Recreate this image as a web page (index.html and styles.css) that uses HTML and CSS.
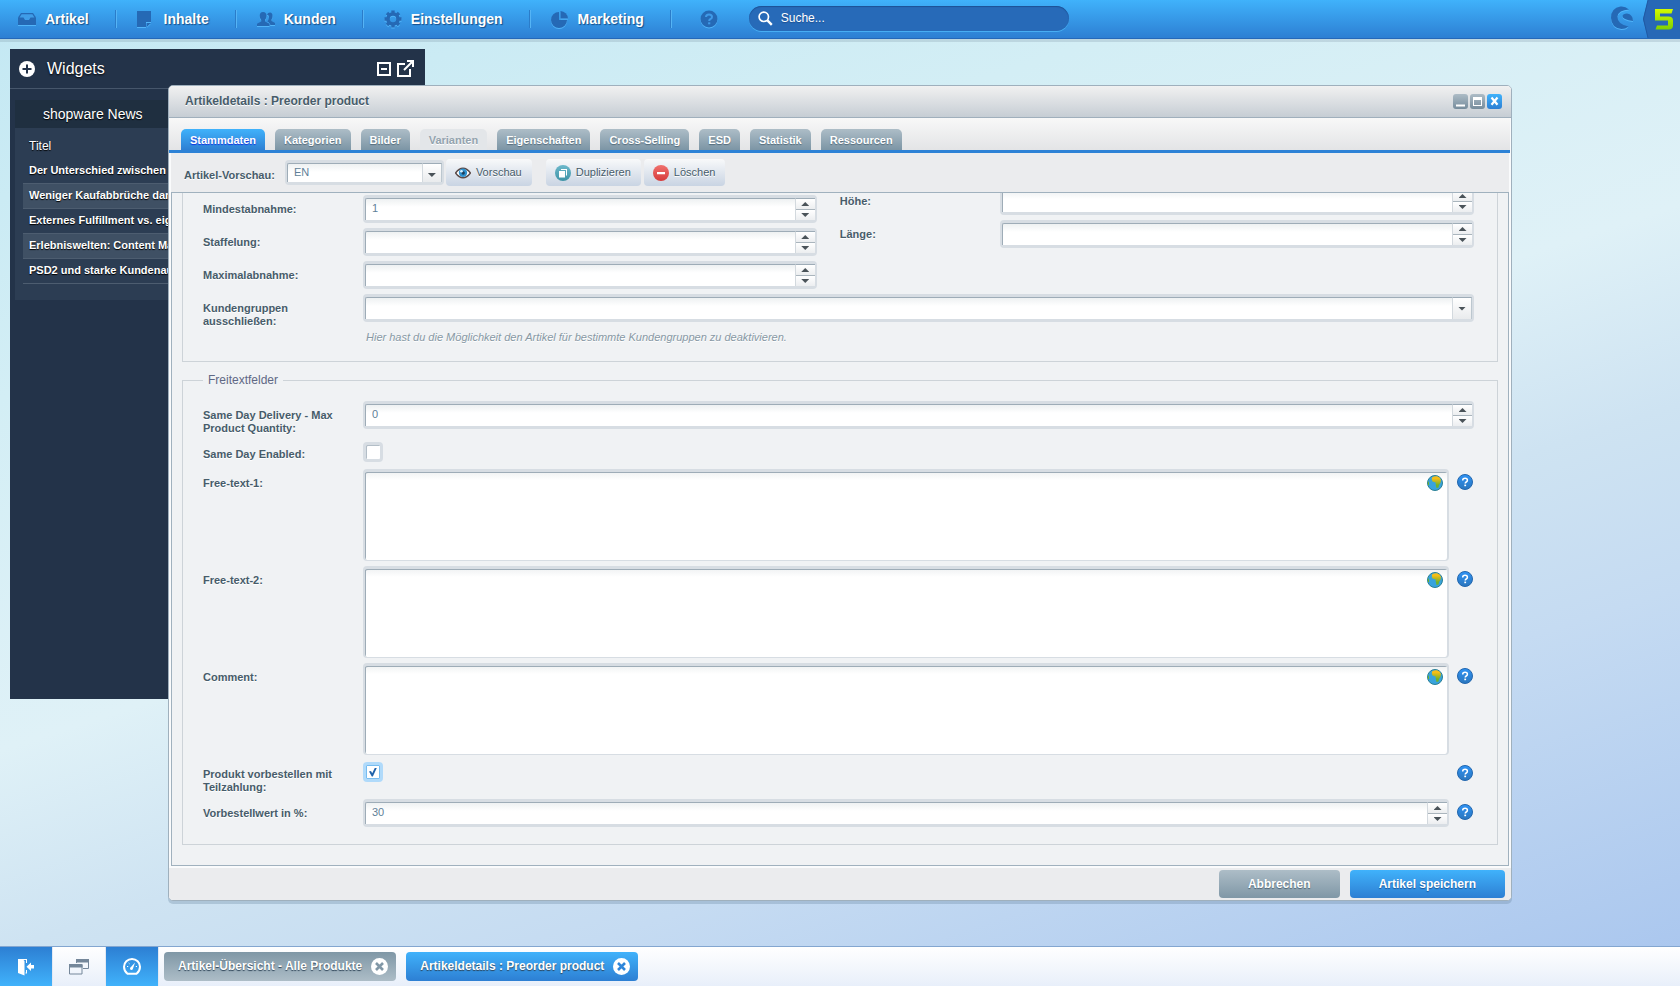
FILE: index.html
```html
<!DOCTYPE html>
<html lang="de">
<head>
<meta charset="utf-8">
<title>Artikeldetails : Preorder product</title>
<link rel="stylesheet" href="styles.css">
</head>
<body>
<svg class="defs" width="0" height="0" aria-hidden="true">
  <defs>
    <linearGradient id="teal" x1="0" y1="0" x2="0" y2="1"><stop offset="0" stop-color="#6cb8cb"/><stop offset="1" stop-color="#3e93a6"/></linearGradient>
    <linearGradient id="red" x1="0" y1="0" x2="0" y2="1"><stop offset="0" stop-color="#f0726e"/><stop offset="1" stop-color="#d63a3a"/></linearGradient>
    <linearGradient id="land" x1="0" y1="0" x2="0" y2="1"><stop offset="0.2" stop-color="#f6bd17"/><stop offset="0.75" stop-color="#6fb22c"/></linearGradient>
    <linearGradient id="lime" x1="0" y1="0" x2="0" y2="1"><stop offset="0" stop-color="#d4fb00"/><stop offset="1" stop-color="#7ed000"/></linearGradient>
    <linearGradient id="helpfill" x1="0" y1="0" x2="0" y2="1"><stop offset="0" stop-color="#2f93f5"/><stop offset="1" stop-color="#2a76bd"/></linearGradient>
    <symbol id="globe" viewBox="0 0 16 16"><circle cx="8" cy="8" r="7.5" fill="#38a3dd" stroke="#2a7f94"/><path d="M5 2.5Q7 1 10 1.2Q13 2 14 5L13.5 8L12 10L11.5 12.5L9.5 13L8.800 10L8.500 7.500L5.500 6.500L4.800 4.500Z" fill="url(#land)"/><path d="M.8 6L2 7.500L2 10L1 10Z" fill="#6fb22c"/></symbol>
    <symbol id="help" viewBox="0 0 16 16"><circle cx="8" cy="8" r="7.5" fill="url(#helpfill)" stroke="#2367ae"/><path d="M5.700 6.400Q5.700 4.300 8.100 4.300Q10.400 4.300 10.400 6.200Q10.400 7.300 9.200 8Q8.200 8.600 8.200 9.500" fill="none" stroke="#fff" stroke-width="1.500"/><path d="M7.300 10.600h1.800v1.600H7.300Z" fill="#fff"/></symbol>
    <symbol id="close" viewBox="0 0 17 17"><circle cx="8.500" cy="8.500" r="8.500" fill="#fff"/><path d="M5 5L12 12M12 5L5 12" stroke="currentColor" stroke-width="2.600"/></symbol>
  </defs>
</svg>

<header class="topbar">
  <nav class="menu">
    <button class="menu-item"><svg width="18" height="14" viewBox="0 0 18 14"><path d="M3 1H15L18 5.500V13H0V5.500Z"/><path d="M3.600 2.300H14.400L16.400 5.500H12.500L11 8H7L5.500 5.500H1.600Z" fill="#3f9de8"/></svg>Artikel</button>
    <button class="menu-item"><svg width="18" height="18" viewBox="0 0 18 18"><path d="M0 1H14V12H9V17H0ZM10 13H13.800L10 16.800Z"/></svg>Inhalte</button>
    <button class="menu-item"><svg width="18" height="16" viewBox="0 0 18 16"><path d="M10 3.500Q11 1.500 13 1.500Q15.500 1.500 15.500 5Q15.500 7 14.500 8.500V10L18 12V14H13.500Q13 12 10.500 10.500Q12 8.500 12 6Q12 4 10 3.500Z"/><path d="M6 1Q9.500 1 9.500 5Q9.500 7.300 8 9V10.500L12.500 12.800V15H0V12.800L4.200 10.500V9Q2.700 7.300 2.700 5Q2.700 1 6 1Z"/></svg>Kunden</button>
    <button class="menu-item"><svg width="18" height="18" viewBox="0 0 18 18"><circle cx="9" cy="9" r="5" fill="none" stroke="#2569b5" stroke-width="3.600"/><path d="M7.300 0.500h3.400v3H7.300ZM7.300 14.500h3.400v3H7.300ZM.5 7.300h3v3.400h-3ZM14.500 7.300h3v3.400h-3Z"/><path d="M7.300 0.500h3.400v3H7.300ZM7.300 14.500h3.400v3H7.300ZM.5 7.300h3v3.400h-3ZM14.500 7.300h3v3.400h-3Z" transform="rotate(45 9 9)"/></svg>Einstellungen</button>
    <button class="menu-item"><svg width="18" height="18" viewBox="0 0 18 18"><path d="M8 2V10H16A8 8 0 1 1 8 2Z"/><path d="M9.500 1A8 8 0 0 1 17 8.500H9.500Z"/></svg>Marketing</button>
    <button class="menu-help" aria-label="Hilfe"><svg width="18" height="18" viewBox="0 0 18 18"><circle cx="9" cy="9" r="8.500"/><path d="M6 7Q6 4.500 9 4.500Q12 4.500 12 7Q12 8.300 10.300 9.200Q9.200 9.800 9.200 11" fill="none" stroke="#3f9ae8" stroke-width="2"/><path d="M8.100 12.300h2.200v2H8.100Z" fill="#3f9ae8"/></svg></button>
  </nav>
  <label class="search">
    <svg width="15" height="15" viewBox="0 0 15 15"><circle cx="5.800" cy="5.800" r="4.700" fill="none" stroke="#fff" stroke-width="1.700"/><path d="M9.200 9.200L13.800 13.800" stroke="#fff" stroke-width="2.400"/></svg>
    <input type="search" placeholder="Suche..." aria-label="Suche">
  </label>
  <div class="brand">
    <svg width="24" height="24" viewBox="0 0 24 24"><path d="M19 3.500Q15 0 10.500 .5Q1 2 1 12Q1.500 22 11.500 23Q15.500 23 18.500 20.500Q7 18 7.500 10.500Q8.500 4 19 3.500Z"/><path d="M12.500 10Q13 7.500 17 7.500Q23 8.500 23 15Q18 14.500 15 13Q12.500 11.800 12.500 10Z"/></svg>
    <svg class="five" width="37" height="38" viewBox="0 0 37 38"><path d="M5 0H37V38H5L0 19Z" fill="#2768b6"/><path d="M5 0L.5 19L5 38" fill="none" stroke="#2059a3"/><path d="M12 9H30L28.500 13.500H17V16.500H25.500Q30 16.500 30 20.500V25.500Q30 29.500 25.500 29.500H12.500L14 25.500H25V20.500H12Z" fill="url(#lime)"/></svg>
  </div>
</header>

<main class="desktop">
  <section class="widgets">
    <header class="widgets-head">
      <button aria-label="Widget hinzufügen"><svg width="16" height="16" viewBox="0 0 16 16"><circle cx="8" cy="8" r="8" fill="#fff"/><path d="M8 3.500V12.500M3.500 8H12.500" stroke="#23334a" stroke-width="2"/></svg></button>
      <h2>Widgets</h2>
      <button aria-label="Minimieren"><svg width="14" height="14" viewBox="0 0 14 14"><path d="M1 1H13V13H1ZM4 7H10" fill="none" stroke="#fff" stroke-width="2"/></svg></button>
      <button aria-label="Abdocken"><svg width="17" height="17" viewBox="0 0 17 17"><path d="M8 4H1V16H13V9M7 10L14.500 2.500" fill="none" stroke="#fff" stroke-width="2"/><path d="M10 0H17V7H15V3.800L13.200 2H10Z" fill="#fff"/></svg></button>
    </header>
    <div class="news">
      <h3>shopware News</h3>
      <table>
        <thead><tr><th>Titel</th></tr></thead>
        <tbody>
          <tr><td>Der Unterschied zwischen</td></tr>
          <tr><td>Weniger Kaufabbrüche dank</td></tr>
          <tr><td>Externes Fulfillment vs. eigen</td></tr>
          <tr><td>Erlebniswelten: Content Mar</td></tr>
          <tr><td>PSD2 und starke Kundenaut</td></tr>
        </tbody>
      </table>
    </div>
  </section>

  <section class="window">
    <header class="window-head">
      <h1>Artikeldetails : Preorder product</h1>
      <button class="tool" aria-label="Minimieren"><svg width="15" height="15" viewBox="0 0 15 15"><path d="M3 10.500H12V12.500H3Z" fill="#fff"/></svg></button>
      <button class="tool" aria-label="Maximieren"><svg width="15" height="15" viewBox="0 0 15 15"><path d="M3 3H12V12H3ZM4 6V11H11V6Z" fill="#fff" fill-rule="evenodd"/></svg></button>
      <button class="tool tool-close" aria-label="Schließen"><svg width="15" height="15" viewBox="0 0 15 15"><path d="M4.500 3.500L10.500 10.800M10.500 3.500L4.500 10.800" stroke="#fff" stroke-width="2.200"/></svg></button>
    </header>
    <div class="tabs" role="tablist">
      <button role="tab" class="tab tab-active" aria-selected="true">Stammdaten</button>
      <button role="tab" class="tab">Kategorien</button>
      <button role="tab" class="tab">Bilder</button>
      <button role="tab" class="tab" disabled>Varianten</button>
      <button role="tab" class="tab">Eigenschaften</button>
      <button role="tab" class="tab">Cross-Selling</button>
      <button role="tab" class="tab">ESD</button>
      <button role="tab" class="tab">Statistik</button>
      <button role="tab" class="tab">Ressourcen</button>
    </div>
    <div class="toolbar">
      <label for="preview">Artikel-Vorschau:</label>
      <div class="control control-small">
        <select id="preview"><option>EN</option></select>
        <span class="trigger"><i class="down"></i></span>
      </div>
      <div class="tool-group">
        <button class="action"><svg width="16" height="16" viewBox="0 0 16 16"><path d="M.6 8Q4 3.200 8 3.200Q12 3.200 15.400 8Q12 12.700 8 12.700Q4 12.700 .6 8Z" fill="#fff" stroke="#5a4a48" stroke-width="1.400"/><circle cx="8" cy="7.800" r="4.200" fill="#2f93d0"/><circle cx="8.200" cy="8" r="1.700" fill="#1c3e5c"/><circle cx="6.500" cy="6.300" r="1.300" fill="#d9f1ff"/></svg>Vorschau</button>
      </div>
      <div class="tool-group">
        <button class="action"><svg width="16" height="16" viewBox="0 0 16 16"><circle cx="8" cy="8" r="8" fill="url(#teal)"/><path d="M6 4H12V10.500H11V5H6ZM4 6H10V12.500H4Z" fill="#fff"/></svg>Duplizieren</button>
        <button class="action"><svg width="16" height="16" viewBox="0 0 16 16"><circle cx="8" cy="8" r="8" fill="url(#red)"/><path d="M4 7H12V9.200H4Z" fill="#fff"/></svg>Löschen</button>
      </div>
    </div>

    <form class="form">
      <fieldset class="group group-scrolled">
        <div class="columns">
          <div class="fields">
            <div class="field"><label for="min">Mindestabnahme:</label><div class="control"><input id="min" type="text" value="1"><span class="spin"><button type="button" aria-label="Mehr"><i class="up"></i></button><button type="button" aria-label="Weniger"><i class="down"></i></button></span></div></div>
            <div class="field"><label for="step">Staffelung:</label><div class="control"><input id="step" type="text"><span class="spin"><button type="button" aria-label="Mehr"><i class="up"></i></button><button type="button" aria-label="Weniger"><i class="down"></i></button></span></div></div>
            <div class="field"><label for="max">Maximalabnahme:</label><div class="control"><input id="max" type="text"><span class="spin"><button type="button" aria-label="Mehr"><i class="up"></i></button><button type="button" aria-label="Weniger"><i class="down"></i></button></span></div></div>
          </div>
          <div class="fields fields-raised">
            <div class="field"><label for="height">Höhe:</label><div class="control"><input id="height" type="text"><span class="spin"><button type="button" aria-label="Mehr"><i class="up"></i></button><button type="button" aria-label="Weniger"><i class="down"></i></button></span></div></div>
            <div class="field"><label for="length">Länge:</label><div class="control"><input id="length" type="text"><span class="spin"><button type="button" aria-label="Mehr"><i class="up"></i></button><button type="button" aria-label="Weniger"><i class="down"></i></button></span></div></div>
          </div>
        </div>
        <div class="field">
          <label for="groups">Kundengruppen ausschließen:</label>
          <div>
            <div class="control"><select id="groups"><option></option></select><span class="trigger"><i class="down"></i></span></div>
            <p class="hint">Hier hast du die Möglichkeit den Artikel für bestimmte Kundengruppen zu deaktivieren.</p>
          </div>
        </div>
      </fieldset>

      <fieldset class="group group-free">
        <legend>Freitextfelder</legend>
        <div class="fields">
          <div class="field"><label for="qty">Same Day Delivery - Max Product Quantity:</label><div class="control"><input id="qty" type="text" value="0"><span class="spin"><button type="button" aria-label="Mehr"><i class="up"></i></button><button type="button" aria-label="Weniger"><i class="down"></i></button></span></div></div>
          <div class="field"><label for="sameday">Same Day Enabled:</label><input class="check" id="sameday" type="checkbox"></div>
          <div class="field"><label for="free1">Free-text-1:</label><div class="area"><textarea id="free1"></textarea><svg class="globe" width="16" height="16"><use href="#globe"/></svg></div><svg class="help" width="16" height="16"><use href="#help"/></svg></div>
          <div class="field"><label for="free2">Free-text-2:</label><div class="area"><textarea id="free2"></textarea><svg class="globe" width="16" height="16"><use href="#globe"/></svg></div><svg class="help" width="16" height="16"><use href="#help"/></svg></div>
          <div class="field"><label for="comment">Comment:</label><div class="area"><textarea id="comment"></textarea><svg class="globe" width="16" height="16"><use href="#globe"/></svg></div><svg class="help" width="16" height="16"><use href="#help"/></svg></div>
          <div class="field"><label for="preorder">Produkt vorbestellen mit Teilzahlung:</label><input class="check" id="preorder" type="checkbox" checked><svg class="help" width="16" height="16"><use href="#help"/></svg></div>
          <div class="field"><label for="percent">Vorbestellwert in %:</label><div class="control"><input id="percent" type="text" value="30"><span class="spin"><button type="button" aria-label="Mehr"><i class="up"></i></button><button type="button" aria-label="Weniger"><i class="down"></i></button></span></div><svg class="help" width="16" height="16"><use href="#help"/></svg></div>
        </div>
      </fieldset>
    </form>

    <footer class="window-foot">
      <button class="btn">Abbrechen</button>
      <button class="btn btn-primary">Artikel speichern</button>
    </footer>
  </section>
</main>

<footer class="taskbar">
  <button class="dock dock-blue" aria-label="Abmelden"><svg width="16" height="18" viewBox="0 0 16 18"><path d="M0 1H9V5H8V2H5.500L6.500 3V17.500L0 15ZM8 12H9V15.500H7.500V14.500H8Z" fill="#fff"/><path d="M16 7V10.500H13V13L8.500 8.800L13 4.500V7Z" fill="#fff"/></svg></button>
  <button class="dock" aria-label="Fenster"><svg width="21" height="16" viewBox="0 0 21 16"><path d="M7.500 4V1.500H19.500V9.500H14" fill="none" stroke="#75879a"/><path d="M7 0H20V3.500H7ZM0 5H13.500V8.500H0Z" fill="#75879a"/><path d="M.5 6V15H13V6Z" fill="none" stroke="#75879a"/></svg></button>
  <button class="dock dock-blue" aria-label="Leistung"><svg width="18" height="18" viewBox="0 0 18 18"><path d="M4.500 15.800H13.500Q17 13 17 8.800A8 7.800 0 0 0 1 8.800Q1 13 4.500 15.800Z" fill="none" stroke="#fff" stroke-width="2"/><path d="M12 4.500L10 10.500A1.500 1.500 0 1 1 8 9Z" fill="#fff"/><path d="M4 8.500H5.200M5.700 5L6.500 5.800M12.800 8.500H14" stroke="#fff"/></svg></button>
  <div class="task task-grey"><button class="task-title">Artikel-Übersicht - Alle Produkte</button><button class="task-close" aria-label="Schließen"><svg width="17" height="17"><use href="#close"/></svg></button></div>
  <div class="task task-blue"><button class="task-title">Artikeldetails : Preorder product</button><button class="task-close" aria-label="Schließen"><svg width="17" height="17"><use href="#close"/></svg></button></div>
</footer>
</body>
</html>
```
FILE: styles.css
```css
* { box-sizing: border-box; }
html { height: 100%; }
body {
  margin: 0;
  min-height: 100%;
  display: flex;
  flex-direction: column;
  font: 11px/13px "Liberation Sans", Arial, sans-serif;
  color: #475c6a;
  background: linear-gradient(162deg, #c3e8f3 0%, #d3eef5 26%, #dff1f7 49%, #cee3f2 62%, #c5dbf2 74%, #a8c5ee 100%);
}
button, input, select, textarea { font: inherit; color: inherit; margin: 0; }
button { border: 0; padding: 0; background: none; }
h1, h2, h3, p { margin: 0; }
svg { display: block; flex: none; }
.defs { position: absolute; }

/* Top bar */
.topbar {
  display: flex;
  height: 39px;
  border-bottom: 1px solid #2568b9;
  background: linear-gradient(#40b2fb, #2d7fd3);
  box-shadow: 0 3px 0 rgba(110, 130, 150, .22);
}
.menu { display: flex; align-items: center; }
.menu svg, .brand svg { fill: #2569b5; filter: drop-shadow(0 1px 0 rgba(90, 190, 255, .8)); }
.menu-item {
  display: flex;
  align-items: center;
  gap: 9px;
  height: 18px;
  padding: 0 27px 0 20px;
  border-right: 1px solid #55b4f5;
  box-shadow: inset -1px 0 0 #2b7cc9;
  font-size: 14px;
  font-weight: bold;
  color: #fff;
  text-shadow: 1px 1px 1px rgba(10, 50, 100, .7);
}
.menu-item:first-child { padding-left: 18px; }
.menu-help { padding: 0 31px 0 28px; }
.search {
  display: flex;
  align-items: center;
  gap: 8px;
  width: 320px;
  height: 25px;
  margin-top: 6px;
  padding: 0 9px;
  border-radius: 13px;
  background: #276ab8;
  box-shadow: inset 0 1px 1px #1d5296, 0 1px 0 #48aef3;
}
.search input {
  flex: 1;
  min-width: 0;
  padding: 0;
  border: 0;
  outline: 0;
  background: none;
  font-size: 12px;
  color: #fff;
}
.search input::placeholder { color: #fff; opacity: 1; text-shadow: 0 1px 1px #1d4f8f; }
.brand { display: flex; gap: 9px; margin-left: auto; }
.brand svg:first-child { margin-top: 6px; }
.brand .five { filter: none; }

.desktop { position: relative; flex: 1; }

/* Widgets panel */
.widgets {
  position: absolute;
  left: 10px;
  top: 10px;
  width: 415px;
  height: 650px;
  background: #233349;
  color: #fff;
}
.widgets-head {
  display: flex;
  align-items: center;
  height: 40px;
  padding: 0 11px 0 9px;
  border-bottom: 1px solid #46566b;
}
.widgets-head h2 { flex: 1; margin-left: 12px; font: 16px/20px "Liberation Sans", Arial, sans-serif; text-shadow: 0 1px 2px #000; }
.widgets-head button + button { margin-left: 6px; }
.news { margin: 11px 5px 0; height: 200px; background: #2c3d53; text-shadow: 0 1px 1px #000; }
.news h3 { padding: 0 28px; font: 14px/28px "Liberation Sans", Arial, sans-serif; background: #1f2f40; }
.news table { width: 387px; margin: 6px 8px 0; border-collapse: collapse; }
.news th { height: 24px; padding: 0 6px; font: 12px/14px "Liberation Sans", Arial, sans-serif; text-align: left; }
.news td { height: 25px; padding: 0 6px; font-weight: bold; border-bottom: 1px solid #4d5d70; }
.news tbody tr:nth-child(even) { background: #3f5064; }

/* Window */
.window {
  position: absolute;
  left: 168px;
  right: 168px;
  top: 46px;
  border: 1px solid #9fb0bd;
  border-radius: 5px;
  background: #fafbfc;
  box-shadow: 0 3px 0 rgba(100, 130, 155, .3);
  overflow: hidden;
}
.window-head {
  display: flex;
  align-items: center;
  gap: 2px;
  height: 32px;
  padding: 0 9px 0 16px;
  border-bottom: 1px solid #a0afbc;
  background: linear-gradient(#f1f1f1, #c6cdd4);
}
.window-head h1 { flex: 1; padding-bottom: 2px; font-size: 12px; line-height: 14px; text-shadow: 0 1px 0 #fff; }
.tool { border-radius: 3px; background: linear-gradient(#adbcc6, #768c9c); }
.tool-close { background: linear-gradient(#40b2fb, #2d7fd3); }
.tabs {
  display: flex;
  align-items: flex-end;
  gap: 10px;
  height: 35px;
  margin-right: 1px;
  padding: 0 12px;
  border-bottom: 3px solid #2d82d6;
  background: linear-gradient(#f8f8f8, #e3e4e6);
}
.tab {
  height: 21px;
  padding: 2px 9px 0;
  border-radius: 5px 5px 0 0;
  background: linear-gradient(#adbdc7, #7c95a5);
  font-weight: bold;
  color: #fff;
  text-shadow: 0 1px 1px #536b7b;
}
.tab-active { background: linear-gradient(#40b2fb, #2d7fd3); text-shadow: 0 1px 1px #1030e0; }
.tab:disabled { background: #e3e6e9; color: #93a3ae; text-shadow: 0 1px 0 #fff; }
.toolbar {
  display: flex;
  align-items: flex-start;
  height: 39px;
  margin: 0 2px;
  padding: 6px 13px;
  background: #ebecee;
}
.toolbar label { margin: 10px 10px 0 0; font-weight: bold; text-shadow: 0 1px 0 #fff; }
.tool-group { display: flex; gap: 3px; margin-left: 2px; }
.tool-group + .tool-group { margin-left: 14px; }
.action {
  display: flex;
  align-items: center;
  gap: 5px;
  height: 27px;
  padding: 0 10px 0 9px;
  border-radius: 4px;
  background: linear-gradient(#f8f9fa, #c9d4e3);
  text-shadow: 0 1px 0 #fff;
}

/* Form */
.form {
  margin: 0 2px;
  padding: 0 10px 20px;
  border: 1px solid #a0b1be;
  background: #f0f2f4;
  overflow: hidden;
}
.group { min-width: 0; margin: 0; padding: 2px 23px 17px 20px; border: 1px solid #cdd3d8; }
.group-scrolled { border-top: 0; }
.group-free { margin-top: 12px; padding-top: 14px; }
.group legend { padding: 0 5px; font-size: 12px; color: #5f6884; }
.columns { display: grid; grid-template-columns: 30fr 31fr; gap: 23px; align-items: start; margin-bottom: 5px; }
.fields { display: grid; gap: 5px; }
.fields-raised { margin-top: -8px; }
.field { display: grid; grid-template-columns: 160px 1fr auto; align-items: start; }
.field label { padding: 8px 20px 0 0; font-weight: bold; text-shadow: 0 1px 0 #fff; }
.control {
  display: flex;
  height: 28px;
  border: solid #d7dde3;
  border-width: 3px 2px;
  border-radius: 4px;
}
.control-small { width: 159px; height: 25px; margin-top: 1px; }
.control input, .control select {
  flex: 1;
  min-width: 0;
  padding: 0 5px 2px 6px;
  appearance: none;
  border: solid #9eacb7;
  border-width: 1px 0 0 1px;
  border-radius: 2px 0 0 0;
  outline: 0;
  background: linear-gradient(#eef1f2, #fff 8px);
  color: #5f7f98;
}
.trigger, .spin {
  flex: none;
  width: 20px;
  border-top: 1px solid #9eacb7;
  border-left: 1px solid #d3d9de;
  background: #fff;
}
.trigger { display: grid; place-items: center; border-right: 1px solid #bcc7cf; background: linear-gradient(#fff, #e9ebed); }
.control-small .trigger { padding-top: 4px; }
.spin { display: grid; grid-template-rows: 10px 1fr; }
.spin button { display: grid; place-items: center; background: linear-gradient(#fff, #eceef0); }
.spin button + button { border-top: 1px solid #aab5bd; }
.up, .down { width: 8px; height: 4px; background: #4a5359; }
.up { clip-path: polygon(50% 0, 100% 100%, 0 100%); }
.down { clip-path: polygon(0 0, 100% 0, 50% 100%); }
.hint { margin: 9px 0 0 3px; font-style: italic; color: #8798a4; text-shadow: 0 1px 0 #fff; }
.check {
  appearance: none;
  width: 20px;
  height: 20px;
  margin: 2px 0;
  border: 3px solid #d7dde3;
  border-radius: 4px;
  background: #fff;
  box-shadow: inset 1px 1px 0 #b3bec7;
}
.check:checked { border-color: #b0dafa; box-shadow: inset 0 0 0 1px #78bdf0; display: grid; place-items: center; }
.check:checked::before {
  content: "";
  width: 8px;
  height: 9px;
  background: #1f62aa;
  clip-path: polygon(0 45%, 25% 40%, 40% 65%, 75% 0, 100% 0, 48% 100%, 35% 100%);
}
.area { position: relative; }
.area textarea {
  display: block;
  width: 100%;
  height: 92px;
  padding: 5px;
  border: solid #d7dde3;
  border-width: 3px 2px 1px;
  border-radius: 4px;
  outline: 0;
  resize: none;
  background: linear-gradient(#f0f2f3, #fff 8px) padding-box;
  box-shadow: inset 1px 1px 0 #9eacb7;
}
.globe { position: absolute; top: 6px; right: 6px; }
.help { margin: 5px 1px 0 8px; }
.window-foot {
  display: flex;
  justify-content: flex-end;
  gap: 10px;
  margin-top: 2px;
  padding: 2px 6px 2px;
  background: #ebecee;
}
.btn {
  height: 28px;
  padding: 0 29px;
  border-radius: 4px;
  background: linear-gradient(#adbdc7, #7f97a6);
  font-size: 12px;
  font-weight: bold;
  color: #fff;
  text-shadow: 0 1px 1px #4c6272;
}
.btn-primary { background: linear-gradient(#40b2fb, #2d7fd3); text-shadow: 0 1px 1px #1b5598; }

/* Taskbar */
.taskbar {
  display: flex;
  align-items: center;
  height: 40px;
  border-top: 1px solid #83a6d0;
  background: linear-gradient(#fff, #e8effa);
}
.dock { display: grid; place-items: center; width: 53px; height: 100%; border-right: 1px solid #e3e9f3; }
.dock-blue { background: linear-gradient(#2d7fd3, #40b2fb); }
.task {
  display: flex;
  align-items: center;
  gap: 9px;
  height: 29px;
  margin-left: 5px;
  padding: 0 8px 0 14px;
  border-radius: 4px;
}
.task + .task { margin-left: 10px; }
.task-title { font-size: 12px; font-weight: bold; color: #fff; text-shadow: 0 1px 1px #2c4256; }
.task-grey { background: linear-gradient(#7f97a6, #adbdc7); color: #8298a7; }
.task-blue { background: linear-gradient(#40b2fb, #2d7fd3); color: #2f86da; }
```
